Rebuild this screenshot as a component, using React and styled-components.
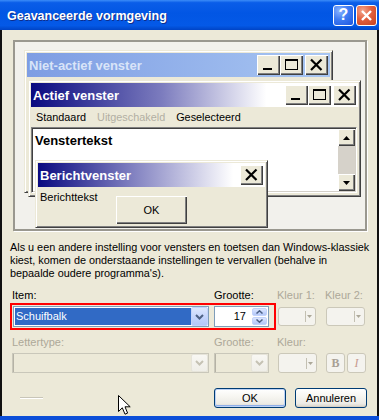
import React from 'react';
import styled, { createGlobalStyle } from 'styled-components';

const UI = `"Liberation Sans", Arial, sans-serif`;

const GlobalStyle = createGlobalStyle`
  html, body { margin: 0; padding: 0; background: #ffffff; }
  body { font-family: ${UI}; font-size: 11px; }
  *, *::before, *::after { box-sizing: border-box; }
`;

const Dialog = styled.div`
  position: relative;
  width: 379px;
  height: 420px;
  display: flex;
  flex-direction: column;
  font-family: ${UI};
  font-size: 11px;
  color: #000;
`;

const TitleBar = styled.div`
  flex: none;
  height: 30px;
  display: flex;
  align-items: center;
  gap: 2px;
  padding: 0 2px 0 7px;
  background: linear-gradient(180deg, #3C8CF8 0%, #0A5DE8 9%, #0256E4 45%, #0459E7 85%, #0044C6 100%);
`;

const TitleText = styled.div`
  flex: 1;
  padding-top: 1px;
  color: #fff;
  font-size: 12.5px;
  font-weight: bold;
  text-shadow: 1px 1px 0 #0F2D8A;
  white-space: nowrap;
`;

const FrameButton = styled.div`
  width: 21px;
  height: 21px;
  border: 1px solid #fff;
  border-radius: 3px;
  display: grid;
  place-items: center;
  color: #fff;
  font-weight: bold;
  font-size: 16px;
  line-height: 1;
  background: ${p => p.$tone === 'close'
    ? 'radial-gradient(circle at 30% 25%, #F3A68E 0%, #E2603F 45%, #C6411F 100%)'
    : 'radial-gradient(circle at 30% 25%, #8CB4FF 0%, #3F7CF3 45%, #1E56DF 100%)'};
`;

const Body = styled.div`
  flex: 1;
  display: flex;
  flex-direction: column;
  padding: 10px 8px 8px;
  background: #ECE9D8;
  border-left: 2px solid #101010;
  border-right: 2px solid #101010;
`;

const BottomFrame = styled.div`
  flex: none;
  height: 4px;
  background: #0B4ED8;
`;

/* ---------- preview desktop ---------- */

const Desktop = styled.div`
  position: relative;
  flex: none;
  height: 191px;
  margin: 0 2px 0 3px;
  border: 2px solid #9A988F;
  box-shadow: 1px 1px 0 #fff;
  background: #F2F1EC;
  overflow: hidden;
`;

const Win = styled.div`
  position: absolute;
  left: ${p => p.$x}px;
  top: ${p => p.$y}px;
  width: ${p => p.$w}px;
  height: ${p => p.$h}px;
  display: flex;
  flex-direction: column;
  padding: 2px;
  background: #ECE9D8;
  border: 1px solid;
  border-color: #ECE9D8 #404040 #404040 #ECE9D8;
  box-shadow: inset 1px 1px 0 #fff, inset -1px -1px 0 #808080;
`;

const Caption = styled.div`
  flex: none;
  height: 24px;
  display: flex;
  align-items: center;
  padding: 0 2px;
  font-size: 13px;
  font-weight: bold;
  white-space: nowrap;
  color: ${p => (p.$inactive ? '#D9E4F8' : '#ffffff')};
  background: ${p => (p.$inactive
    ? 'linear-gradient(90deg, #7E9DE3 0%, #A8C6F2 100%)'
    : `linear-gradient(90deg, #0A0A80 0%, #7C7CBE 40%, #FFFFFF ${p.$fade}%)`)};
`;

const CaptionLabel = styled.span`
  flex: 1;
`;

const CapBtn = styled.div`
  width: 23px;
  height: 20px;
  margin-left: ${p => p.$gap || 0}px;
  display: grid;
  place-items: center;
  background: #ECE9D8;
  box-shadow: inset 1px 1px 0 #fff, inset -1px -1px 0 #404040, inset -2px -2px 0 #808080;
`;

const MenuBar = styled.div`
  flex: none;
  height: 20px;
  display: flex;
  align-items: center;
  gap: 11px;
  padding-left: 5px;
  font-size: 10.85px;
`;

const MenuItem = styled.span`
  color: ${p => (p.$disabled ? '#B2AFA3' : '#000')};
`;

const Client = styled.div`
  flex: none;
  height: 66px;
  margin-right: 1px;
  display: flex;
  padding: 1px;
  background: #fff;
  border: 1px solid;
  border-color: #808080 #fff #fff #808080;
  box-shadow: inset 1px 1px 0 #404040, inset -1px -1px 0 #D4D0C8;
`;

const ClientText = styled.div`
  flex: 1;
  padding: 4px 2px;
  font-size: 13px;
  font-weight: bold;
  line-height: 16px;
`;

const ScrollBar = styled.div`
  width: 17px;
  display: flex;
  flex-direction: column;
`;

const ScrollTrack = styled.div`
  flex: 1;
  background: #D6D2CA;
`;

const ScrollArrow = styled.div`
  width: 17px;
  height: 17px;
  background: #ECE9D8;
  box-shadow: inset 1px 1px 0 #fff, inset -1px -1px 0 #404040, inset -2px -2px 0 #808080;
  display: grid;
  place-items: center;
`;

const MsgBody = styled.div`
  flex: 1;
  display: grid;
  padding: 0 2px 1px;
`;

const MsgText = styled.span`
  grid-area: 1 / 1;
  align-self: start;
  justify-self: start;
  margin-top: 4px;
  line-height: 13px;
`;

const ClassicButton = styled.div`
  grid-area: 1 / 1;
  align-self: end;
  justify-self: center;
  width: 71px;
  height: 28px;
  display: grid;
  place-items: center;
  background: #ECE9D8;
  box-shadow: inset 1px 1px 0 #fff, inset -1px -1px 0 #404040, inset -2px -2px 0 #808080;
`;

/* ---------- text + fields ---------- */

const Notice = styled.p`
  margin: 10px 0 0;
  font-size: 10.85px;
  line-height: 13px;
  white-space: nowrap;
`;

const FieldGrid = styled.div`
  display: grid;
  grid-template-columns: 204px 63px 48px 1fr;
  row-gap: ${p => p.$rowGap}px;
  margin-top: ${p => p.$top}px;
  align-items: center;
`;

const Label = styled.span`
  line-height: 13px;
  padding-left: ${p => p.$indent || 0}px;
  color: ${p => (p.$disabled ? '#ACA899' : '#000')};
  white-space: nowrap;
`;

const Highlight = styled.div`
  grid-column: 1 / 3;
  justify-self: start;
  display: flex;
  gap: 5px;
  padding: 1px 5px 1px 1px;
  border: 2px solid #FF0000;
`;

const Combo = styled.div`
  width: ${p => p.$w}px;
  height: ${p => p.$h}px;
  margin-left: ${p => p.$ml || 0}px;
  display: flex;
  border: 1px solid ${p => (p.$disabled ? '#C9C7BA' : '#7F9DB9')};
  background: ${p => (p.$disabled ? '#ECE9D8' : '#fff')};
  box-shadow: ${p => (p.$disabled ? 'inset 1px 0 0 #B5B2A5' : 'none')};
`;

const Selection = styled.div`
  flex: 1;
  margin: 1px 0 1px 1px;
  padding-left: 1px;
  background: #316AC5;
  color: #fff;
  line-height: 17px;
`;

const ComboField = styled.div`
  flex: 1;
`;

const DropButton = styled.div`
  width: 17px;
  display: grid;
  place-items: center;
  border-radius: 2px;
  border: 1px solid ${p => (p.$disabled ? '#E6E4DA' : '#C3D3FB')};
  background: ${p => (p.$disabled
    ? 'linear-gradient(180deg, #F8F7F3 0%, #EFEEE8 100%)'
    : 'linear-gradient(180deg, #DDE7FE 0%, #C4D4FC 55%, #B4C8F8 100%)')};
`;

const SpinValue = styled.div`
  flex: 1;
  text-align: right;
  padding-right: 6px;
  line-height: 19px;
`;

const SpinColumn = styled.div`
  width: 15px;
  margin: 1px 1px 1px 0;
  display: flex;
  flex-direction: column;
  gap: 1px;
`;

const SpinHalf = styled.div`
  flex: 1;
  display: grid;
  place-items: center;
  border-radius: 2px;
  border: 1px solid #C3D3FB;
  background: linear-gradient(180deg, #DDE7FE 0%, #C4D4FC 55%, #B4C8F8 100%);
`;

const ColorPick = styled.div`
  width: ${p => p.$w}px;
  height: ${p => p.$h}px;
  margin-left: 1px;
  display: flex;
  align-items: center;
  justify-content: flex-end;
  padding-right: 3px;
  border: 1px solid #CBC8B9;
  border-radius: 3px;
  background: #F4F3EE;
`;

const PickSep = styled.span`
  width: 1px;
  height: 11px;
  margin-right: 1px;
  background: #C3C0B2;
`;

const ToggleGroup = styled.div`
  display: flex;
  gap: 2px;
  margin-left: 1px;
`;

const ToggleButton = styled.div`
  width: 19px;
  height: 20px;
  display: grid;
  place-items: center;
  border: 1px solid #CBC8B9;
  border-radius: 3px;
  background: #F4F3EE;
  font-family: "Liberation Serif", "Times New Roman", serif;
  font-size: 12px;
  font-weight: ${p => (p.$italic ? 'normal' : 'bold')};
  font-style: ${p => (p.$italic ? 'italic' : 'normal')};
  color: ${p => (p.$italic ? '#C79A8E' : '#A8A095')};
`;

/* ---------- footer ---------- */

const Footer = styled.div`
  margin-top: 15px;
  height: 20px;
  display: flex;
  align-items: center;
`;

const Grip = styled.div`
  width: 23px;
  height: 2px;
  margin-left: 10px;
  border-top: 1px solid #C8C5B8;
  border-bottom: 1px solid #fff;
`;

const ButtonRow = styled.div`
  margin-left: auto;
  margin-right: 2px;
  display: flex;
  gap: 9px;
`;

const PushButton = styled.div`
  width: 72px;
  height: 20px;
  display: grid;
  place-items: center;
  border: 1px solid #003C74;
  border-radius: 3px;
  background: linear-gradient(180deg, #FFFFFF 0%, #F6F5F0 45%, #ECEBE6 80%, #D9D4C9 100%);
  box-shadow: ${p => (p.$default
    ? 'inset 0 0 0 1px #BCD1F5, inset 0 -1px 0 1px #8FAEE8'
    : 'inset 0 -1px 0 #D6D0C5')};
`;

const Pointer = styled.svg`
  position: absolute;
  left: 118px;
  top: 395px;
`;

/* ---------- glyphs ---------- */

const MinGlyph = () => (
  <svg width="23" height="20"><rect x="6" y="13" width="9" height="2" fill="#000" /></svg>
);
const MaxGlyph = () => (
  <svg width="23" height="20"><path d="M5 4h13v11H5z M6 6h11v8H6z" fill="#000" fillRule="evenodd" /></svg>
);
const CloseGlyph = () => (
  <svg width="23" height="20"><path d="M6 4.5 L16.5 15 M16.5 4.5 L6 15" stroke="#000" strokeWidth="2.2" /></svg>
);
const Chevron = ({ color }) => (
  <svg width="9" height="6"><path d="M1 1 L4.5 4.5 L8 1" fill="none" stroke={color} strokeWidth="2" /></svg>
);
const SpinChevron = ({ up }) => (
  <svg width="7" height="4">
    <path d={up ? 'M0.5 3.5 L3.5 0.8 L6.5 3.5' : 'M0.5 0.5 L3.5 3.2 L6.5 0.5'} fill="none" stroke="#4D6185" strokeWidth="1.5" />
  </svg>
);
const TinyArrow = () => (
  <svg width="5" height="3"><path d="M0 0 H5 L2.5 3 Z" fill="#ACA899" /></svg>
);
const ScrollTri = ({ up }) => (
  <svg width="7" height="4"><path d={up ? 'M0 4 H7 L3.5 0 Z' : 'M0 0 H7 L3.5 4 Z'} fill="#000" /></svg>
);

export default function App() {
  return (
    <>
      <GlobalStyle />
      <Dialog>
        <TitleBar>
          <TitleText>Geavanceerde vormgeving</TitleText>
          <FrameButton>?</FrameButton>
          <FrameButton $tone="close">
            <svg width="13" height="13"><path d="M2 2 L11 11 M11 2 L2 11" stroke="#fff" strokeWidth="2.4" /></svg>
          </FrameButton>
        </TitleBar>

        <Body>
          <Desktop>
            <Win $x={9} $y={8} $w={309} $h={143}>
              <Caption $inactive>
                <CaptionLabel>Niet-actief venster</CaptionLabel>
                <CapBtn><MinGlyph /></CapBtn>
                <CapBtn><MaxGlyph /></CapBtn>
                <CapBtn $gap={2}><CloseGlyph /></CapBtn>
              </Caption>
            </Win>

            <Win $x={13} $y={38} $w={333} $h={117}>
              <Caption $fade={72}>
                <CaptionLabel>Actief venster</CaptionLabel>
                <CapBtn><MinGlyph /></CapBtn>
                <CapBtn><MaxGlyph /></CapBtn>
                <CapBtn $gap={2}><CloseGlyph /></CapBtn>
              </Caption>
              <MenuBar>
                <MenuItem>Standaard</MenuItem>
                <MenuItem $disabled>Uitgeschakeld</MenuItem>
                <MenuItem>Geselecteerd</MenuItem>
              </MenuBar>
              <Client>
                <ClientText>Venstertekst</ClientText>
                <ScrollBar>
                  <ScrollArrow><ScrollTri up /></ScrollArrow>
                  <ScrollTrack />
                  <ScrollArrow><ScrollTri /></ScrollArrow>
                </ScrollBar>
              </Client>
            </Win>

            <Win $x={20} $y={118} $w={233} $h={68}>
              <Caption $fade={86}>
                <CaptionLabel>Berichtvenster</CaptionLabel>
                <CapBtn><CloseGlyph /></CapBtn>
              </Caption>
              <MsgBody>
                <MsgText>Berichttekst</MsgText>
                <ClassicButton>OK</ClassicButton>
              </MsgBody>
            </Win>
          </Desktop>

          <Notice>
            Als u een andere instelling voor vensters en toetsen dan Windows-klassiek<br />
            kiest, komen de onderstaande instellingen te vervallen (behalve in<br />
            bepaalde oudere programma's).
          </Notice>

          <FieldGrid $top={9} $rowGap={1}>
            <Label $indent={2}>Item:</Label>
            <Label>Grootte:</Label>
            <Label $disabled>Kleur 1:</Label>
            <Label $disabled>Kleur 2:</Label>

            <Highlight>
              <Combo $w={196} $h={21}>
                <Selection>Schuifbalk</Selection>
                <DropButton><Chevron color="#4D6185" /></DropButton>
              </Combo>
              <Combo $w={55} $h={21}>
                <SpinValue>17</SpinValue>
                <SpinColumn>
                  <SpinHalf><SpinChevron up /></SpinHalf>
                  <SpinHalf><SpinChevron /></SpinHalf>
                </SpinColumn>
              </Combo>
            </Highlight>
            <ColorPick $w={38} $h={19}><PickSep /><TinyArrow /></ColorPick>
            <ColorPick $w={39} $h={19}><PickSep /><TinyArrow /></ColorPick>
          </FieldGrid>

          <FieldGrid $top={6} $rowGap={4}>
            <Label $indent={2} $disabled>Lettertype:</Label>
            <Label $disabled>Grootte:</Label>
            <Label $disabled>Kleur:</Label>
            <span />

            <Combo $w={197} $h={20} $ml={2} $disabled>
              <ComboField />
              <DropButton $disabled><Chevron color="#C5C2B4" /></DropButton>
            </Combo>
            <Combo $w={55} $h={20} $disabled>
              <ComboField />
              <DropButton $disabled><Chevron color="#C5C2B4" /></DropButton>
            </Combo>
            <ColorPick $w={39} $h={20}><PickSep /><TinyArrow /></ColorPick>
            <ToggleGroup>
              <ToggleButton>B</ToggleButton>
              <ToggleButton $italic>I</ToggleButton>
            </ToggleGroup>
          </FieldGrid>

          <Footer>
            <Grip />
            <ButtonRow>
              <PushButton $default>OK</PushButton>
              <PushButton>Annuleren</PushButton>
            </ButtonRow>
          </Footer>
        </Body>
        <BottomFrame />

        <Pointer width="14" height="21" viewBox="0 0 14 21">
          <path d="M0.5 0.5 L0.5 16.5 L4.3 12.8 L7 19.2 L9.6 18.1 L7 11.8 L12.2 11.8 Z" fill="#fff" stroke="#000" strokeWidth="1" strokeLinejoin="miter" />
        </Pointer>
      </Dialog>
    </>
  );
}
